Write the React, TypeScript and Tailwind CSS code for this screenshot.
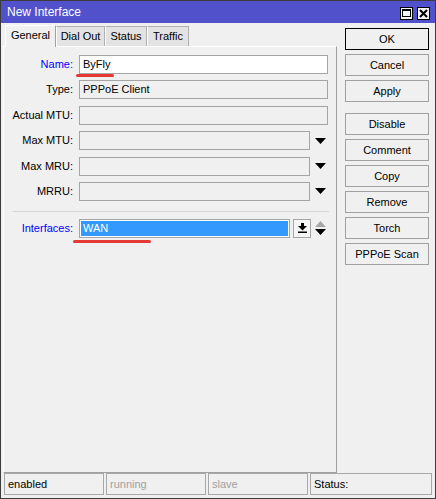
import React from 'react';

// Field row: label on the left, box on the right
const Row = ({
  label,
  blue = false,
  children,
}: {
  label: string;
  blue?: boolean;
  children: React.ReactNode;
}) => (
  <div className="flex items-center h-[19px]">
    <div className={`w-[69px] text-right leading-none ${blue ? 'text-[#0000ff]' : 'text-black'}`}>
      {label}
    </div>
    <div className="ml-[6px] flex items-center h-full">{children}</div>
  </div>
);

const Box = ({
  width,
  value = '',
  white = false,
}: {
  width: string;
  value?: string;
  white?: boolean;
}) => (
  <div
    className={`${width} h-[19px] border border-[#a5a5a5] flex items-center pl-[3px] leading-none ${
      white ? 'bg-white' : 'bg-[#f0f0f0]'
    }`}
  >
    {value}
  </div>
);

const DownArrow = () => (
  <div className="w-[20px] flex justify-center">
    <svg width="11" height="6" viewBox="0 0 11 6">
      <polygon points="0,0 11,0 5.5,6" fill="#000" />
    </svg>
  </div>
);

const ActionButton = ({ label, primary = false }: { label: string; primary?: boolean }) => (
  <button
    className={`w-[84px] h-[22px] flex items-center justify-center bg-[#f0f0f0] leading-none ${
      primary ? 'border border-black' : 'border border-[#a0a0a0]'
    }`}
  >
    {label}
  </button>
);

const StatusCell = ({ text, width, dim = false }: { text: string; width: string; dim?: boolean }) => (
  <div
    className={`${width} h-[22px] border border-[#a8a8a8] flex items-center pl-[3px] leading-none ${
      dim ? 'text-[#a0a0a0]' : 'text-black'
    }`}
  >
    {text}
  </div>
);

export default function App() {
  const tabs = [
    { label: 'Dial Out', w: 'w-[49px]' },
    { label: 'Status', w: 'w-[42px]' },
    { label: 'Traffic', w: 'w-[42px]' },
  ];

  return (
    <div className="w-[436px] h-[499px] border border-[#3c3c3c] bg-[#f0f0f0] flex flex-col font-['Liberation_Sans',Arial,sans-serif] text-[11px] text-black select-none">
      {/* Title bar */}
      <div className="h-[22px] bg-[#5151cc] flex items-center justify-between pl-[6px] pr-[5px]">
        <span className="text-white text-[12px] leading-none">New Interface</span>
        <div className="flex gap-[4px] pt-[2px]">
          <div className="w-[13px] h-[13px] bg-[#f4f4f4] border border-black flex items-center justify-center">
            <div className="w-[9px] h-[8px] border border-black border-t-2" />
          </div>
          <div className="w-[13px] h-[13px] bg-[#f4f4f4] border border-black flex items-center justify-center">
            <svg width="9" height="9" viewBox="0 0 9 9">
              <path d="M1 1 L8 8 M8 1 L1 8" stroke="#000" strokeWidth="2" />
            </svg>
          </div>
        </div>
      </div>

      {/* Body */}
      <div className="flex flex-1 min-h-0">
        {/* Tabs + panel */}
        <div className="flex flex-col pl-[2px] pt-[1px] w-[336px]">
          <div className="flex items-end h-[22px] pl-[2px]">
            <div className="w-[51px] h-[22px] bg-[#f0f0f0] border-l border-t border-white border-r border-r-[#a0a0a0] flex items-center justify-center leading-none -mb-px relative z-10 pb-[2px]">
              General
            </div>
            {tabs.map((t) => (
              <div
                key={t.label}
                className={`${t.w} h-[20px] bg-[#e3e3e3] border-t border-r border-[#b0b0b0] border-l border-l-white flex items-center justify-center leading-none`}
              >
                {t.label}
              </div>
            ))}
          </div>
          <div className="flex-1 relative border-t border-l border-white border-r border-b border-r-[#a0a0a0] border-b-[#a0a0a0] pt-[8px] flex flex-col gap-[6.4px]">
            <Row label="Name:" blue>
              <Box width="w-[249px]" value="ByFly" white />
            </Row>
            <Row label="Type:">
              <Box width="w-[249px]" value="PPPoE Client" />
            </Row>
            <Row label="Actual MTU:">
              <Box width="w-[249px]" />
            </Row>
            <Row label="Max MTU:">
              <Box width="w-[231px]" />
              <DownArrow />
            </Row>
            <Row label="Max MRU:">
              <Box width="w-[231px]" />
              <DownArrow />
            </Row>
            <Row label="MRRU:">
              <Box width="w-[231px]" />
              <DownArrow />
            </Row>

            <div className="ml-[9px] w-[316px] h-px bg-[#d4d4d4] mt-[3.6px] mb-[0.6px]" />

            <Row label="Interfaces:" blue>
              <div className="w-[211px] h-[19px] border border-[#a5a5a5] bg-white p-px">
                <div className="w-full h-full bg-[#3399ff] text-white flex items-center pl-[2px] leading-none">
                  WAN
                </div>
              </div>
              <div className="ml-[3px] w-[18px] h-[19px] border border-[#a5a5a5] bg-[#f6f6f6] flex items-center justify-center">
                <svg width="9" height="10" viewBox="0 0 9 10">
                  <rect x="3" y="0" width="3" height="3" fill="#000" />
                  <polygon points="0,3 9,3 4.5,7.5" fill="#000" />
                  <rect x="0" y="8.5" width="9" height="1.5" fill="#000" />
                </svg>
              </div>
              <div className="w-[19px] flex justify-center">
                <svg width="11" height="14" viewBox="0 0 11 14">
                  <polygon points="5.5,0 11,6 0,6" fill="#a8a8a8" />
                  <polygon points="0,8 11,8 5.5,14" fill="#000" />
                </svg>
              </div>
            </Row>

            {/* red annotation marks */}
            <div className="absolute left-[72px] top-[27px] w-[38px] h-[3px] rounded-full bg-[#e53935]" />
            <div className="absolute left-[69px] top-[193px] w-[78px] h-[3px] rounded-full bg-[#e53935]" />
          </div>
        </div>

        {/* Buttons */}
        <div className="pl-[8px] pt-[5px] flex flex-col gap-[4px]">
          <ActionButton label="OK" primary />
          <ActionButton label="Cancel" />
          <ActionButton label="Apply" />
          <div className="h-[3px]" />
          <ActionButton label="Disable" />
          <ActionButton label="Comment" />
          <ActionButton label="Copy" />
          <ActionButton label="Remove" />
          <ActionButton label="Torch" />
          <ActionButton label="PPPoE Scan" />
        </div>
      </div>

      {/* Status bar */}
      <div className="h-[22px] flex gap-[2px] pl-[3px] mb-[3px]">
        <StatusCell text="enabled" width="w-[100px]" />
        <StatusCell text="running" width="w-[100px]" dim />
        <StatusCell text="slave" width="w-[100px]" dim />
        <StatusCell text="Status:" width="w-[122px]" />
      </div>
    </div>
  );
}
